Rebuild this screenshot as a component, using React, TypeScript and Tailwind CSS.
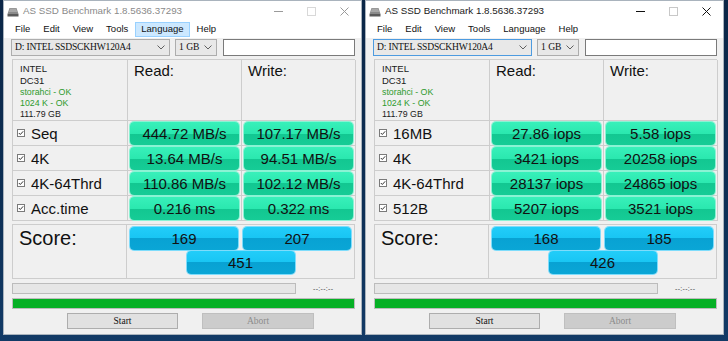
import React from "react";

type Row = { label: string; r: string; w: string };
type Win = {
  active: boolean;
  langHi: boolean;
  comboFocus: boolean;
  rows: Row[];
  scores: [string, string, string];
};

const sans = "font-['Liberation_Sans',Arial,sans-serif]";
const serif = "font-['Liberation_Serif','Times_New_Roman',serif]";

function DiskIcon() {
  return (
    <svg width="12" height="10" viewBox="0 0 12 10">
      <path d="M2.5 1 L9.5 1 L11.5 7 L0.5 7 Z" fill="#8a8a8a" />
      <path d="M3 1.5 L9 1.5 L10.2 5 L1.8 5 Z" fill="#a8a8a8" />
      <rect x="0.5" y="7" width="11" height="2.5" fill="#5a5a5a" />
    </svg>
  );
}

function Controls({ active }: { active: boolean }) {
  const c = active ? "#111" : "#9a9a9a";
  return (
    <div className="flex h-full">
      <div className="w-[33px] flex items-center justify-center">
        <svg width="9" height="9" viewBox="0 0 9 9">
          <line x1="0" y1="4.5" x2="9" y2="4.5" stroke={c} strokeWidth="1" />
        </svg>
      </div>
      <div className="w-[33px] flex items-center justify-center">
        <svg width="9" height="9" viewBox="0 0 9 9">
          <rect x="0.5" y="0.5" width="8" height="8" fill="none" stroke={active ? "#c8c8c8" : "#d8d8d8"} strokeWidth="1" />
        </svg>
      </div>
      <div className="w-[33px] flex items-center justify-center">
        <svg width="9" height="9" viewBox="0 0 9 9">
          <line x1="0.5" y1="0.5" x2="8.5" y2="8.5" stroke={c} strokeWidth="1" />
          <line x1="8.5" y1="0.5" x2="0.5" y2="8.5" stroke={c} strokeWidth="1" />
        </svg>
      </div>
    </div>
  );
}

function Chevron() {
  return (
    <svg width="8" height="5" viewBox="0 0 8 5">
      <path d="M0.5 0.5 L4 4 L7.5 0.5" fill="none" stroke="#606060" strokeWidth="1" />
    </svg>
  );
}

function Check() {
  return (
    <svg width="8" height="8" viewBox="0 0 8 8" className="shrink-0">
      <rect x="0.5" y="0.5" width="7" height="7" fill="#fff" stroke="#7a7a7a" strokeWidth="1" />
      <path d="M1.8 4 L3.3 5.5 L6.2 2.3" fill="none" stroke="#333" strokeWidth="1" />
    </svg>
  );
}

function Val({ v }: { v: string }) {
  return (
    <div className="h-[23px] mx-[2px] mt-[1px] rounded-[4px] bg-[linear-gradient(to_bottom,#38f0ba_0%,#2be8af_50%,#12c791_50%,#16cc96_100%)] shadow-[0_0_0_1px_#8af3d4] flex items-center justify-center text-[15px] leading-none text-[#111]">
      {v}
    </div>
  );
}

function Blue({ v }: { v: string }) {
  return (
    <div className="w-[108px] h-[23px] rounded-[4px] bg-[linear-gradient(to_bottom,#22cdf9_0%,#18c5f3_50%,#08a2d3_50%,#0aa6d6_100%)] shadow-[0_0_0_1px_#7edcfb] flex items-center justify-center text-[15px] leading-none text-[#111]">
      {v}
    </div>
  );
}

function Window({ w }: { w: Win }) {
  const menus = ["File", "Edit", "View", "Tools", "Language", "Help"];
  const cell = "border-r border-b border-[#cdcdcd]";
  return (
    <div className={`w-[359px] h-[335px] bg-[#f0f0f0] border border-[#a9b3bd] flex flex-col ${sans}`}>
      {/* title bar */}
      <div className="h-[20px] bg-white flex items-center shrink-0">
        <div className="ml-[2px] mt-[1px] w-[14px] flex justify-center">
          <DiskIcon />
        </div>
        <div className={`ml-[3px] text-[9.8px] ${w.active ? "text-[#1a1a1a]" : "text-[#8a8a8a]"}`}>
          AS SSD Benchmark 1.8.5636.37293
        </div>
        <div className="ml-auto h-full">
          <Controls active={w.active} />
        </div>
      </div>
      {/* menu */}
      <div className="h-[17px] bg-white flex items-center pl-[5px] gap-[1px] shrink-0">
        {menus.map((m) => (
          <div
            key={m}
            className={`h-[15px] px-[5px] flex items-center text-[9.5px] text-[#111] border ${
              w.langHi && m === "Language" ? "bg-[#cce8ff] border-[#99d1ff]" : "border-transparent"
            }`}
          >
            {m}
          </div>
        ))}
      </div>
      {/* combos */}
      <div className="flex mt-[1px] ml-[7px] h-[17px] shrink-0">
        <div
          className={`w-[159px] h-full border ${w.comboFocus ? "border-[#4d9be0]" : "border-[#adadad]"} bg-[#e8e8e8] flex items-center justify-between pl-[3px] pr-[4px]`}
        >
          <span className={`${serif} text-[9.6px] tracking-[-0.2px] text-[#111]`}>D: INTEL SSDSCKHW120A4</span>
          <Chevron />
        </div>
        <div className="ml-[5px] w-[42px] h-full border border-[#adadad] bg-[#e8e8e8] flex items-center justify-between pl-[3px] pr-[4px]">
          <span className={`${serif} text-[9.6px] text-[#111]`}>1 GB</span>
          <Chevron />
        </div>
        <div className="ml-[6px] w-[132px] h-full border border-[#7a7a7a] bg-white" />
      </div>
      {/* grid */}
      <div className="ml-[8px] mt-[3px] w-[343px] grid grid-cols-[115px_114px_114px] grid-rows-[61px_25px_25px_25px_25px] border-t border-l border-[#cdcdcd] shrink-0">
        <div className={`${cell} pl-[7px] pt-[3px] flex flex-col`}>
          <div className="text-[9.5px] leading-[12px] text-[#1a1a1a]">INTEL</div>
          <div className="text-[9.5px] leading-[12px] text-[#1a1a1a]">DC31</div>
          <div className="text-[8.8px] leading-[11px] text-[#2e9a2e]">storahci - OK</div>
          <div className="text-[8.8px] leading-[11px] text-[#2e9a2e]">1024 K - OK</div>
          <div className="text-[8.8px] leading-[11px] text-[#1a1a1a]">111.79 GB</div>
        </div>
        <div className={`${cell} pl-[6px] pt-[2px] text-[15px] leading-[17px] text-[#111]`}>Read:</div>
        <div className={`${cell} pl-[6px] pt-[2px] text-[15px] leading-[17px] text-[#111]`}>Write:</div>
        {w.rows.map((r) => (
          <React.Fragment key={r.label}>
            <div className={`${cell} flex items-center pl-[4px] gap-[6px]`}>
              <Check />
              <span className="text-[15px] leading-none text-[#111]">{r.label}</span>
            </div>
            <div className={cell}>
              <Val v={r.r} />
            </div>
            <div className={cell}>
              <Val v={r.w} />
            </div>
          </React.Fragment>
        ))}
      </div>
      {/* score */}
      <div className="ml-[8px] mt-[3px] w-[343px] h-[55px] border border-[#cdcdcd] flex shrink-0">
        <div className="w-[114px] border-r border-[#cdcdcd] pl-[6px] pt-[2px] text-[20px] leading-[23px] text-[#111]">
          Score:
        </div>
        <div className="flex-1 flex flex-col items-center pt-[2px] gap-[1px]">
          <div className="flex gap-[5px]">
            <Blue v={w.scores[0]} />
            <Blue v={w.scores[1]} />
          </div>
          <Blue v={w.scores[2]} />
        </div>
      </div>
      {/* progress */}
      <div className="ml-[8px] mt-[4px] h-[11px] flex items-center shrink-0">
        <div className="w-[284px] h-full bg-[#e6e6e6] border border-[#bcbcbc]" />
        <div className="ml-[17px] text-[7px] leading-none text-[#444] tracking-[0.3px]">--:--:--</div>
      </div>
      <div className="ml-[8px] mt-[4px] w-[343px] h-[11px] bg-[#06b025] border border-[#bcbcbc] shrink-0" />
      {/* buttons */}
      <div className="ml-[63px] mt-[4px] h-[16px] flex gap-[24px] shrink-0">
        <div className={`w-[111px] h-full bg-[#e1e1e1] border border-[#adadad] flex items-center justify-center ${serif} text-[9.5px] text-[#111]`}>
          Start
        </div>
        <div className={`w-[112px] h-full bg-[#cccccc] border border-[#bfbfbf] flex items-center justify-center ${serif} text-[9.5px] text-[#8d8d8d]`}>
          Abort
        </div>
      </div>
    </div>
  );
}

const left: Win = {
  active: false,
  langHi: true,
  comboFocus: false,
  rows: [
    { label: "Seq", r: "444.72 MB/s", w: "107.17 MB/s" },
    { label: "4K", r: "13.64 MB/s", w: "94.51 MB/s" },
    { label: "4K-64Thrd", r: "110.86 MB/s", w: "102.12 MB/s" },
    { label: "Acc.time", r: "0.216 ms", w: "0.322 ms" },
  ],
  scores: ["169", "207", "451"],
};

const right: Win = {
  active: true,
  langHi: false,
  comboFocus: true,
  rows: [
    { label: "16MB", r: "27.86 iops", w: "5.58 iops" },
    { label: "4K", r: "3421 iops", w: "20258 iops" },
    { label: "4K-64Thrd", r: "28137 iops", w: "24865 iops" },
    { label: "512B", r: "5207 iops", w: "3521 iops" },
  ],
  scores: ["168", "185", "426"],
};

export default function App() {
  return (
    <div className="w-[728px] h-[341px] overflow-hidden bg-[linear-gradient(to_bottom,#0b2647_0%,#0d2f55_60%,#123a66_100%)] flex gap-[3px] pl-[3px]">
      <Window w={left} />
      <Window w={right} />
    </div>
  );
}
